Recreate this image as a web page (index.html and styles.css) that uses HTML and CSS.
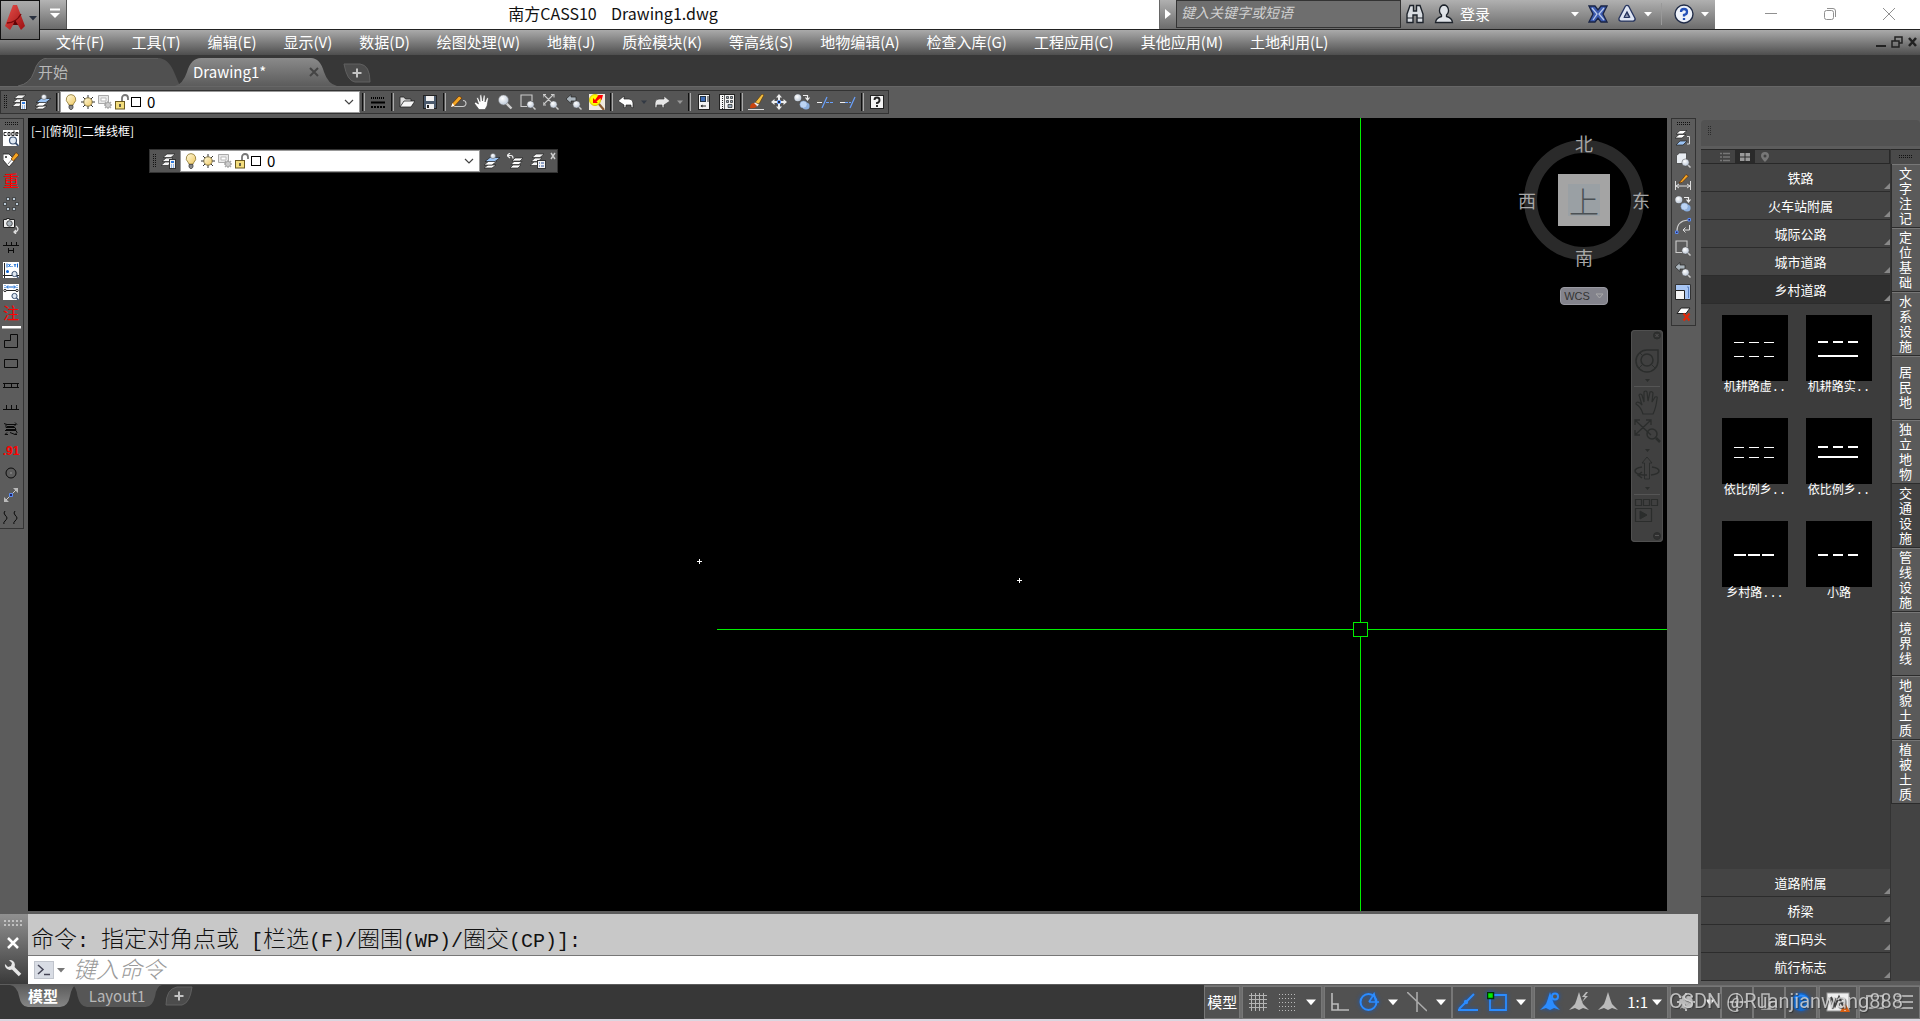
FILE: index.html
```html
<!DOCTYPE html>
<html lang="zh-CN">
<head>
<meta charset="utf-8">
<title>南方CASS10 Drawing1.dwg</title>
<link rel="stylesheet" href="styles.css">
</head>
<body>
<svg class="sprite" aria-hidden="true">
  <defs>
    <linearGradient id="gBulb" x1="0" y1="0" x2="1" y2="1"><stop offset="0" stop-color="#fffbe0"/><stop offset="1" stop-color="#f0c860"/></linearGradient>
    <linearGradient id="gRed" x1="0" y1="0" x2="1" y2="1"><stop offset="0" stop-color="#e8504a"/><stop offset="1" stop-color="#9c0f12"/></linearGradient>
    <radialGradient id="gLens" cx=".4" cy=".35" r=".7"><stop offset="0" stop-color="#fff"/><stop offset="1" stop-color="#b8c4d4"/></radialGradient>
  </defs>
  <symbol id="i-stack" viewBox="0 0 16 16"><g fill="#f4f4f4" stroke="#2a2a2a" stroke-width=".7"><path d="M0 12.500l4-3.500h7l-4 3.500z"/><path d="M1 8.500l4-3.500h7l-4 3.500z"/><path d="M2 4.500l4-3.500h8l-4 3.500z"/></g></symbol>
  <symbol id="i-layerprops" viewBox="0 0 16 16"><use href="#i-stack"/><rect x="8.500" y="6.500" width="6" height="9" fill="#f2f2f2" stroke="#333"/><rect x="10" y="8" width="3" height="2" fill="#2f7be0"/><path d="M10 12h1m1 0h1M10 14h1m1 0h1" stroke="#2f7be0"/></symbol>
  <symbol id="i-layerlist" viewBox="0 0 16 16"><use href="#i-stack"/><rect x="7.500" y="7.500" width="8" height="8" fill="#f2f2f2" stroke="#333"/><path d="M9 10h1m1 0h3M9 13h1m1 0h3" stroke="#2a4f9a"/></symbol>
  <symbol id="i-layercur" viewBox="0 0 16 16"><g stroke="#222" stroke-width=".7"><path d="M0 15l4-3h8l-4 3z" fill="#fff"/><path d="M0 12l5-4h8l-5 4z" fill="#fff"/><path d="M1 8.500l5-4h10l-5 4z" fill="#9cc4f4"/></g><circle cx="9" cy="3" r="2.600" fill="url(#gLens)" stroke="#666" stroke-width=".5"/></symbol>
  <symbol id="i-layerprev" viewBox="0 0 16 16"><g fill="#fff" stroke="#222" stroke-width=".7"><path d="M3 15l3-3h8l-3 3z"/><path d="M4 11.500l3-3h8l-3 3z"/><path d="M5 8l3-3h8l-3 3z"/></g><path d="M3 0L0 2.500 3 5M0 2.500h4q2 0 2 3" fill="none" stroke="#eee" stroke-width="1.200"/></symbol>
  <symbol id="i-bulb" viewBox="0 0 16 16"><path d="M8 .6a4.800 4.800 0 0 1 3 8.500L10 11H6L5 9.100A4.800 4.800 0 0 1 8 .6z" fill="url(#gBulb)" stroke="#8a7330" stroke-width=".8"/><path d="M6 11.500h4v2.500l-1.200 1.500H7.200L6 14z" fill="#888" stroke="#333" stroke-width=".7"/></symbol>
  <symbol id="i-sun" viewBox="0 0 16 16"><path d="M8 1v14M1 8h14M3 3l10 10M13 3L3 13" stroke="#333"/><circle cx="8" cy="8" r="4.200" fill="url(#gBulb)" stroke="#6a5a28" stroke-width=".8"/></symbol>
  <symbol id="i-vpfreeze" viewBox="0 0 16 16"><path d="M1.500 1.500h10v8h-10z" fill="#e8e8e8" stroke="#aaa"/><path d="M4 4h5v3H4z" fill="#fff" stroke="#bbb"/><path d="M11 7v8M7 11h8M8 8l6 6m0-6l-6 6" stroke="#aaa" stroke-width="1.300"/><circle cx="11" cy="11" r="2.600" fill="#ccc" stroke="#999" stroke-width=".7"/></symbol>
  <symbol id="i-lock" viewBox="0 0 16 16"><path d="M8 8V4a3 3 0 0 1 6 0v2" fill="none" stroke="#777" stroke-width="1.800"/><rect x="1.500" y="7.500" width="9" height="7.500" fill="#f3dd7c" stroke="#6b5a20"/><path d="M6 10v3" stroke="#333" stroke-width="1.500"/></symbol>
  <symbol id="i-lines" viewBox="0 0 16 16"><path d="M1 4h14" stroke="#000" stroke-width="2" stroke-dasharray="1 1"/><path d="M1 8.500h14" stroke="#000" stroke-width="2"/><path d="M1 13h14" stroke="#000" stroke-width="2" stroke-dasharray="2 1"/></symbol>
  <symbol id="i-open" viewBox="0 0 16 16"><path d="M1 13V3h4l1.500 2H12v2" fill="#ddd" stroke="#222" stroke-width=".8"/><path d="M1 13l4-6h11l-4 6z" fill="#f5f5f5" stroke="#222" stroke-width=".8"/></symbol>
  <symbol id="i-save" viewBox="0 0 16 16"><rect x="1.500" y="1.500" width="13" height="13" fill="#4b5a6c" stroke="#222"/><rect x="4" y="2" width="8" height="5" fill="#f0f0f0"/><rect x="4" y="10" width="8" height="5" fill="#f0f0f0"/><path d="M6 11v3" stroke="#222" stroke-width="2"/></symbol>
  <symbol id="i-pencil" viewBox="0 0 16 16"><path d="M3 12.500h9a3 3 0 0 0 0-6" fill="none" stroke="#ccc" stroke-width="1.100"/><path d="M0 13l1.500-4L8 2l3 2-7.500 8z" fill="#f5a623" stroke="#5a2d0a" stroke-width=".7"/><path d="M0 13l1.500-4 2 3z" fill="#fff"/></symbol>
  <symbol id="i-hand" viewBox="0 0 16 16"><path d="M5 15.500L.5 9.500 1.500 8l3 2L2.500 4l1.500-.7L6 7.500 5.800 1 7.500.6 8.500 7l1-6 1.600.3L11 8l2-4.500 1.500.5L13 12l-2 3.500z" fill="#fff" stroke="#444" stroke-width=".6"/></symbol>
  <symbol id="i-zoom" viewBox="0 0 16 16"><path d="M9.500 9.500l5 5" stroke="#d0d0d0" stroke-width="2.400"/><circle cx="6.500" cy="6" r="5" fill="url(#gLens)" stroke="#777" stroke-width=".5"/></symbol>
  <symbol id="i-smzoom" viewBox="0 0 16 16"><path d="M12.500 12.500l3 3" stroke="#ccc" stroke-width="1.500"/><circle cx="10.500" cy="10.500" r="3.600" fill="url(#gLens)" stroke="#555" stroke-width=".5"/></symbol>
  <symbol id="i-zoomwin" viewBox="0 0 16 16"><path d="M7 12.500H1V1h11v6" fill="none" stroke="#ccc" stroke-width="1.100"/><use href="#i-smzoom"/></symbol>
  <symbol id="i-zoomext" viewBox="0 0 16 16"><path d="M1 1l9 9M10 1L1 10M0 3.500V.5h3M8 .5h3v3M0 8v3h3" fill="none" stroke="#ccc" stroke-width="1.100"/><use href="#i-smzoom"/></symbol>
  <symbol id="i-zoomprev" viewBox="0 0 16 16"><path d="M0 5l5-4.500V3h5v4H5v2.500z" fill="#aab4bc" stroke="#222" stroke-width=".7"/><use href="#i-smzoom"/></symbol>
  <symbol id="i-zoomobj" viewBox="0 0 16 16"><path d="M1.500 3.500l3-2.500h7v8l-3 2.500h-7z" fill="#e9edf2" stroke="#333" stroke-width=".7"/><use href="#i-smzoom"/></symbol>
  <symbol id="i-redzoom" viewBox="0 0 16 16"><path d="M0 0h16v16H0z" fill="#f0eadf"/><circle cx="6" cy="6" r="5.500" fill="#ff0" stroke="#d8c800"/><path d="M4 4v5h5L7.500 7.500l4-3.500 1 2.500L14 1H9.500L6 6z" fill="#f00"/><path d="M10 10l5 6" stroke="#8a5a30" stroke-width="2.200"/></symbol>
  <symbol id="i-undo" viewBox="0 0 16 16"><path d="M0 7l6-5v3h5q4 0 4 4v5l-2-1v-2H8v2l-2 1v-3z" fill="#fff" stroke="#222" stroke-width=".7"/></symbol>
  <symbol id="i-redo" viewBox="0 0 16 16"><path d="M16 7l-6-5v3H5Q1 5 1 9v5l2-1v-2h5v2l2 1v-3z" fill="#e6e6e6" stroke="#444" stroke-width=".7"/></symbol>
  <symbol id="i-sheet" viewBox="0 0 16 16"><rect x="2.500" y=".5" width="11" height="15" fill="#f4f4f4" stroke="#222"/><rect x="4.500" y="2.500" width="5" height="5" fill="#3f6db8" stroke="#234"/><path d="M12 2v6M5 12h5" stroke="#222"/><path d="M4.500 12l2-1.500v3z" fill="#222"/></symbol>
  <symbol id="i-palette" viewBox="0 0 16 16"><rect x=".5" y=".5" width="15" height="15" fill="#f4f4f4" stroke="#222"/><path d="M3.500 2v13" stroke="#222" stroke-dasharray="1 1"/><path d="M5.500 1v14" stroke="#666"/><g fill="#9ab" stroke="#222" stroke-width=".7"><path d="M7.500 2.500h2v2h-2zM11.500 2.500h2v2h-2zM7.500 6.500h2v2h-2zM11.500 6.500h2v2h-2z"/><path d="M9 10.500h4v3H9z"/></g></symbol>
  <symbol id="i-brush" viewBox="0 0 16 16"><path d="M0 15.500h16" stroke="#ddd"/><path d="M7 8.500L14 0l2 1-5 9z" fill="#f6c040" stroke="#5a3a10" stroke-width=".7"/><path d="M5.500 9.500l1.500-1 4 2-2 2z" fill="#eee"/><path d="M2 14q0-5 4-5l3 3q-2 3-7 2z" fill="#c84410"/></symbol>
  <symbol id="i-move" viewBox="0 0 16 16"><path d="M8 0l3 3.500H9V6H7V3.500H5zM8 16l-3-3.500h2V10h2v2.500h2zM0 8l3.500-3v2H6v2H3.500v2zM16 8l-3.500 3V9H10V7h2.500V5z" fill="#eee"/><path d="M6.500 6.500h3v3h-3z" fill="#223" stroke="#6aa2ff"/></symbol>
  <symbol id="i-copy" viewBox="0 0 16 16"><circle cx="3.800" cy="3.800" r="3.500" fill="url(#gLens)"/><circle cx="12" cy="12" r="3.600" fill="#8cb0e0"/><circle cx="9.500" cy="10.500" r="3.600" fill="#bcd4f4" stroke="#7d9cc8" stroke-width=".5"/><path d="M9 1.500h4.500v4M11.500 3.500l2 2.500 2-2.500" fill="none" stroke="#eee" stroke-width="1.200"/></symbol>
  <symbol id="i-trim" viewBox="0 0 16 16"><path d="M0 8.500h5" stroke="#eee"/><path d="M9 8.500h7" stroke="#6aa2ff" stroke-dasharray="3 1"/><path d="M5 14L10 3" stroke="#6aa2ff" stroke-width="1.200"/></symbol>
  <symbol id="i-extend" viewBox="0 0 16 16"><path d="M0 8.500h5" stroke="#eee"/><path d="M5 8.500h6" stroke="#6aa2ff" stroke-dasharray="3 1"/><path d="M10 14l5-11" stroke="#6aa2ff" stroke-width="1.200"/></symbol>
  <symbol id="i-help" viewBox="0 0 16 16"><rect x="1.500" y="1.500" width="13" height="13" fill="#f4f4f4" stroke="#222"/><path d="M5.500 6q0-2.500 2.500-2.500T10.500 6 8 9v1M8 11v2" fill="none" stroke="#222" stroke-width="1.900"/></symbol>
  <symbol id="i-tag" viewBox="0 0 16 16"><path d="M0 2h6l6 6-6 7-6-7z" fill="#fff" stroke="#222" stroke-width=".8"/><circle cx="3" cy="5" r="1" fill="#222"/><path d="M5 12l6-7" stroke="#777"/><path d="M8 7l5-6.500L16 3l-5.500 6z" fill="#f5a623" stroke="#5a2d0a" stroke-width=".7"/></symbol>
  <symbol id="i-code" viewBox="0 0 16 16"><path d="M0 0h16v16H0z" fill="#fff"/><path d="M3.500 2.500H1v3h2.500M5 2.500h2v3H5zM11 .5v5H8.800v-3H11M15 5.500h-2.200v-3H15V4h-2" fill="none" stroke="#111" stroke-width=".9"/><circle cx="10" cy="10.500" r="3.500" fill="#dfe8f2" stroke="#3a5070" stroke-width="1.200"/><path d="M12.500 13l3 3" stroke="#3a5070" stroke-width="1.800"/></symbol>
  <symbol id="i-dots" viewBox="0 0 16 16"><g fill="#b9c8d4" stroke="#333" stroke-width=".8"><path d="M3.500 1.500h3v3h-3zM9.500 1.500h3v3h-3zM.5 6.500h3v3h-3zM12.500 6.500h3v3h-3zM3.500 11.500h3v3h-3zM9.500 11.500h3v3h-3z"/></g></symbol>
  <symbol id="i-camera" viewBox="0 0 16 16"><path d="M.5 1.500h3v-1h3v1h5v8H.5z" fill="#eee" stroke="#222"/><circle cx="6.500" cy="5.500" r="2.800" fill="#aab4bc" stroke="#333" stroke-width=".8"/><path d="M13 8q4 3 0 6h-2m2-2l-2 2 2 2" fill="none" stroke="#ddd" stroke-width="1.300"/></symbol>
  <symbol id="i-fence" viewBox="0 0 16 16"><path d="M0 5.500h16M3.500 2v3.500M8.500 2v3.500M13.500 2v3.500M5.500 8v5M10.500 8v5M5.500 10.500h5" stroke="#0a0a0a" fill="none"/></symbol>
  <symbol id="i-xy" viewBox="0 0 16 16"><path d="M0 0h16v16H0z" fill="#fff"/><path d="M1.500 1v15M0 13.500h16" stroke="#222"/><path d="M4 1.500v4M5.500 2l2 3m0-3l-2 3M9 4v1M11 2l1 1.500L13 2m-1 1.500V5M14.500 1.500v4" stroke="#0a62d0" fill="none"/><circle cx="4.500" cy="9.500" r="1.500" fill="#0a62d0"/><circle cx="11.500" cy="12" r="2.600" fill="#dfe8f2" stroke="#3a5070"/><path d="M13.500 14l2 2" stroke="#3a5070" stroke-width="1.500"/></symbol>
  <symbol id="i-dist" viewBox="0 0 16 16"><path d="M0 0h16v16H0z" fill="#fff"/><path d="M2 1v4M14 1v4" stroke="#0a62d0" stroke-dasharray="1 1"/><path d="M4 3h8M5 1.500L3.500 3 5 4.500M11 1.500L12.500 3 11 4.500" stroke="#0a62d0" fill="none"/><path d="M2 6.500h12" stroke="#222"/><circle cx="2" cy="6.500" r="1.200" fill="#fff" stroke="#222"/><circle cx="14" cy="6.500" r="1.200" fill="#fff" stroke="#222"/><circle cx="11.500" cy="12" r="2.600" fill="#dfe8f2" stroke="#3a5070"/><path d="M13.500 14l2 2" stroke="#3a5070" stroke-width="1.500"/></symbol>
  <symbol id="i-poly" viewBox="0 0 16 16"><path d="M1.500 14.500V7.500h6v-6h7v13z" fill="none" stroke="#0a0a0a"/></symbol>
  <symbol id="i-rect" viewBox="0 0 16 16"><path d="M1.500 4.500h13v8h-13z" fill="none" stroke="#0a0a0a"/></symbol>
  <symbol id="i-rail" viewBox="0 0 16 16"><path d="M0 6.500h16M0 10.500h16M1.500 6v5M8.500 6v5M14.500 6v5" fill="none" stroke="#0a0a0a"/></symbol>
  <symbol id="i-comb" viewBox="0 0 16 16"><path d="M0 10.500h16M3.500 6v4M8.500 6v4M13.500 6v4" fill="none" stroke="#0a0a0a"/></symbol>
  <symbol id="i-scrib" viewBox="0 0 16 16"><path d="M1 2.500l3 1h9l-2 2H4M3 3.500v3h9l1 2H3M2 9.500h11l1 2-2 2M4 11.500l-2 2h3M7 11.500l5 2h2M12 1.500l2 2" fill="none" stroke="#0a0a0a"/></symbol>
  <symbol id="i-circle" viewBox="0 0 16 16"><circle cx="8" cy="8" r="5" fill="none" stroke="#0a0a0a"/><path d="M7.500 8h1" stroke="#ccc"/></symbol>
  <symbol id="i-diag" viewBox="0 0 16 16"><path d="M3 13L13 3" stroke="#ccc"/><path d="M10 1h5v5zM1 10v5h5z" fill="#bbb"/><path d="M6.500 6.500h3v3h-3z" fill="#226" stroke="#5a8cf0"/></symbol>
  <symbol id="i-waves" viewBox="0 0 16 16"><path d="M2 2q-2 2 0 4t2 3-2 3-1 3M12 2q-2 2 0 4t2 3-2 3-1 3" fill="none" stroke="#0a0a0a"/></symbol>
  <symbol id="i-laymatch" viewBox="0 0 16 16"><g stroke="#222" stroke-width=".7"><path d="M1 4l4-3.500h7L8 4z" fill="#fff"/><path d="M0 8l4-3.500h7L7 8z" fill="#fff"/><path d="M1 15l4-4h7l-4 4z" fill="#9cc4f4"/></g><path d="M12 6.500h2.500V14H12" fill="none" stroke="#ddd"/></symbol>
  <symbol id="i-dim" viewBox="0 0 16 16"><path d="M.5 7v9M15.500 7v9M1 12h14M4 10l-3 2 3 2M12 10l3 2-3 2" fill="none" stroke="#ddd"/><path d="M4 9l7-8.500L13.500 2 7 8.500z" fill="#f5a623" stroke="#5a2d0a" stroke-width=".7"/></symbol>
  <symbol id="i-arc" viewBox="0 0 16 16"><path d="M2 13Q2 3 13 2" fill="none" stroke="#ccc" stroke-width="1.200"/><path d="M13 .5h2.500V3H13zM.5 13H3v2.500H.5z" fill="#226" stroke="#5a8cf0"/><path d="M14.500 7v5H8m2.500-2.500L8 12l2.500 2.500" fill="none" stroke="#ddd"/></symbol>
  <symbol id="i-scale" viewBox="0 0 16 16"><path d="M.5.5h15v15H.5z" fill="#a8c6f4" stroke="#333"/><path d="M12 3h1.500v11" stroke="#5a80c0" fill="none"/><path d="M.5 6.500h9v9h-9z" fill="#f4f4f4" stroke="#222"/></symbol>
  <symbol id="i-erase" viewBox="0 0 16 16"><path d="M2 7.500L6 2h9l-4 5.500z" fill="#fff" stroke="#222"/><path d="M8.500 7.500l6 7m0-7l-6 7" stroke="#e02808" stroke-width="2.200"/></symbol>
  <symbol id="i-binoc" viewBox="0 0 20 20"><g fill="#d9dde2" stroke="#1d232b" stroke-width="1.400"><path d="M5 1.500h3.500V7h3V1.500H15L18 10v8.500h-6V11H8v7.500H2V10z"/></g><path d="M2 14h6M12 14h6" stroke="#1d232b"/></symbol>
  <symbol id="i-user" viewBox="0 0 20 20"><path d="M10 1a4.600 5.500 0 0 1 2.500 10v1.500Q18 14 18.500 18.500H1.500Q2 14 7.500 12.500V11A4.600 5.500 0 0 1 10 1z" fill="#dfe3e8" stroke="#1d232b" stroke-width="1.300"/></symbol>
  <symbol id="i-exch" viewBox="0 0 20 20"><path d="M1 2h6l3 4 3-4h6l-4 8 4 8h-6l-3-4-3 4H1l4-8z" fill="#3c5bb0" stroke="#1a2546" stroke-width="1.300"/><path d="M4 4l5 6-4 6M16 4l-5 6 5 6" stroke="#b8c8ea" fill="none" stroke-width="1.300"/></symbol>
  <symbol id="i-a360" viewBox="0 0 20 20"><g fill="none" stroke-linejoin="round" stroke-linecap="round"><path d="M10 3.500L16 15H4z" stroke="#26345f" stroke-width="5.500"/><path d="M10 3.500L16 15H4z" stroke="#dfe6f4" stroke-width="2.800"/><path d="M10 9l2.500 4.500h-5z" fill="#8a94b0" stroke="#26345f"/></g></symbol>
  <symbol id="i-qmark" viewBox="0 0 20 20"><circle cx="10" cy="10" r="9" fill="#eef2fa" stroke="#222d48" stroke-width="1.400"/><path d="M7 8q0-3 3-3t3 2.700T10 11v1.500M10 14v2" fill="none" stroke="#2350b8" stroke-width="2.300"/></symbol>
  <symbol id="i-down" viewBox="0 0 8 8"><path d="M0 2h8L4 6.500z" fill="currentColor"/></symbol>
  <symbol id="i-chev" viewBox="0 0 10 8"><path d="M1 2l4 4 4-4" fill="none" stroke="#444" stroke-width="1.200"/></symbol>
  <symbol id="i-compass" viewBox="0 0 20 20"><path d="M10 0l2.500 8 1.500 4 6 6-6-2-4 2-4-2-6 2 6-6 1.500-4z" fill="currentColor"/></symbol>
</svg>

<header class="titlebar">
  <button class="app-btn" aria-label="应用程序菜单"><svg width="22" height="26" viewBox="0 0 20 26"><path d="M8 0h4l8 21-4 4-3-5H8l-3 5-5-4z" fill="url(#gRed)"/><path d="M2 18q9 0 14-9" fill="none" stroke="#7c0a0c" stroke-width="1.500"/><path d="M8 20l2-5 3 5z" fill="#5e0406"/></svg><svg class="dark" width="8" height="8"><use href="#i-down"/></svg></button>
  <button class="quick-btn" aria-label="自定义"><svg width="12" height="12" viewBox="0 0 12 12"><path d="M1 1.500h10" stroke="#fff" stroke-width="2"/><path d="M1 5h10l-5 5z" fill="#fff"/></svg></button>
  <h1 class="title">南方CASS10 &nbsp;&nbsp; Drawing1.dwg</h1>
  <div class="infocenter">
    <button class="ic-arrow" aria-label="展开"><svg width="6" height="10" viewBox="0 0 6 10"><path d="M0 0l6 5-6 5z" fill="#fff"/></svg></button>
    <input class="ic-search" type="text" aria-label="搜索" placeholder="键入关键字或短语">
    <button aria-label="查找"><svg width="20" height="20"><use href="#i-binoc"/></svg></button>
    <button class="login"><svg width="20" height="20"><use href="#i-user"/></svg><span>登录</span><svg class="login-caret" width="8" height="8"><use href="#i-down"/></svg></button>
    <button aria-label="Exchange"><svg width="20" height="20"><use href="#i-exch"/></svg></button>
    <button class="pair" aria-label="A360"><svg width="20" height="20"><use href="#i-a360"/></svg><svg width="8" height="8"><use href="#i-down"/></svg></button>
    <button class="pair helpbtn" aria-label="帮助"><svg width="20" height="20"><use href="#i-qmark"/></svg><svg width="8" height="8"><use href="#i-down"/></svg></button>
  </div>
  <div class="winctl">
    <button aria-label="最小化"><svg width="14" height="14" viewBox="0 0 14 14"><path d="M1 6.500h12"/></svg></button>
    <button aria-label="还原"><svg width="14" height="14" viewBox="0 0 14 14"><rect x="1.500" y="3.500" width="9" height="9" rx="2"/><path d="M4 1.500h6q2.500 0 2.500 2.500v6"/></svg></button>
    <button aria-label="关闭"><svg width="14" height="14" viewBox="0 0 14 14"><path d="M1 1l12 12M13 1L1 13"/></svg></button>
  </div>
</header>

<nav class="menubar">
  <a href="#">文件(F)</a><a href="#">工具(T)</a><a href="#">编辑(E)</a><a href="#">显示(V)</a><a href="#">数据(D)</a><a href="#">绘图处理(W)</a><a href="#">地籍(J)</a><a href="#">质检模块(K)</a><a href="#">等高线(S)</a><a href="#">地物编辑(A)</a><a href="#">检查入库(G)</a><a href="#">工程应用(C)</a><a href="#">其他应用(M)</a><a href="#">土地利用(L)</a>
  <div class="mdi">
    <button aria-label="最小化图形"><svg width="10" height="12" viewBox="0 0 10 12"><path d="M0 10h10" stroke="#222" stroke-width="2"/></svg></button>
    <button aria-label="还原图形"><svg width="12" height="12" viewBox="0 0 12 12" fill="none" stroke="#222"><path d="M1 5h7v6H1zM4 5V1h7v6H8" stroke-width="1.500"/></svg></button>
    <button aria-label="关闭图形"><svg width="9" height="12" viewBox="0 0 9 12"><path d="M1 2l7 8M8 2l-7 8" stroke="#222" stroke-width="2.500"/></svg></button>
  </div>
</nav>

<div class="doctabs">
  <button class="dtab"><svg class="shape" preserveAspectRatio="none" viewBox="0 0 162 28"><path d="M0 28Q12 26 16 14 20 0 30 0H140Q150 0 156 14L162 28z" fill="#505050"/><path d="M0 28Q12 26 16 14 20 0 30 0H140" fill="none" stroke="#666"/></svg><span>开始</span></button>
  <button class="dtab active"><svg class="shape" preserveAspectRatio="none" viewBox="0 0 162 28"><defs><linearGradient id="gTab" x1="0" y1="0" x2="0" y2="1"><stop offset="0" stop-color="#8a8a8a"/><stop offset="1" stop-color="#5c5c5c"/></linearGradient></defs><path d="M0 28Q8 26 12 14 16 0 26 0H136Q145 0 149 14 153 26 162 28z" fill="url(#gTab)"/></svg><span>Drawing1*</span><svg class="x" width="10" height="10" viewBox="0 0 10 10"><path d="M1 1l8 8M9 1L1 9" stroke="#444" stroke-width="2"/></svg></button>
  <button class="addtab" aria-label="新图形"><svg width="28" height="20" viewBox="0 0 28 20"><path d="M1 1h16q10 1 10 18H12Q4 18 1 1z" fill="#4c4c4c" stroke="#606060"/><path d="M14 5.500v9M9.500 10h9" stroke="#c4c4c4" stroke-width="2"/></svg></button>
</div>

<div class="toolrow">
  <div class="toolbar" role="toolbar" aria-label="标准">
    <i class="grip"></i>
    <button aria-label="图层特性"><svg><use href="#i-layerprops"/></svg></button>
    <button aria-label="置为当前"><svg><use href="#i-layercur"/></svg></button>
    <i class="sep"></i>
    <button class="layer"><svg><use href="#i-bulb"/></svg><svg><use href="#i-sun"/></svg><svg><use href="#i-vpfreeze"/></svg><svg><use href="#i-lock"/></svg><i class="swatch"></i><span>0</span><svg class="chev"><use href="#i-chev"/></svg></button>
    <i class="sep"></i>
    <button aria-label="线型"><svg><use href="#i-lines"/></svg></button>
    <i class="sep"></i>
    <button aria-label="打开"><svg><use href="#i-open"/></svg></button>
    <button aria-label="保存"><svg><use href="#i-save"/></svg></button>
    <i class="sep"></i>
    <button aria-label="绘制"><svg><use href="#i-pencil"/></svg></button>
    <button aria-label="平移"><svg><use href="#i-hand"/></svg></button>
    <button aria-label="缩放"><svg><use href="#i-zoom"/></svg></button>
    <button aria-label="窗口缩放"><svg><use href="#i-zoomwin"/></svg></button>
    <button aria-label="范围缩放"><svg><use href="#i-zoomext"/></svg></button>
    <button aria-label="上一个"><svg><use href="#i-zoomprev"/></svg></button>
    <button aria-label="重画"><svg><use href="#i-redzoom"/></svg></button>
    <i class="sep"></i>
    <button class="wide" aria-label="放弃"><svg><use href="#i-undo"/></svg><svg class="tiny"><use href="#i-down"/></svg></button>
    <button class="wide lit" aria-label="重做"><svg><use href="#i-redo"/></svg><svg class="tiny"><use href="#i-down"/></svg></button>
    <i class="sep"></i>
    <button aria-label="特性"><svg><use href="#i-sheet"/></svg></button>
    <button aria-label="工具选项板"><svg><use href="#i-palette"/></svg></button>
    <i class="sep"></i>
    <button aria-label="特性匹配"><svg><use href="#i-brush"/></svg></button>
    <button aria-label="移动"><svg><use href="#i-move"/></svg></button>
    <button aria-label="复制"><svg><use href="#i-copy"/></svg></button>
    <button aria-label="修剪"><svg><use href="#i-trim"/></svg></button>
    <button aria-label="延伸"><svg><use href="#i-extend"/></svg></button>
    <i class="sep"></i>
    <button aria-label="帮助"><svg><use href="#i-help"/></svg></button>
  </div>
</div>

<main class="workspace">
  <div class="editor">
    <div class="stage">
      <div class="vbar left" role="toolbar" aria-label="实用工具">
        <i class="hgrip"></i>
        <button aria-label="查看编码"><svg><use href="#i-code"/></svg></button>
        <button aria-label="加入编码"><svg><use href="#i-tag"/></svg></button>
        <button class="glyph">重</button>
        <button aria-label="批量选取"><svg><use href="#i-dots"/></svg></button>
        <button aria-label="视图"><svg><use href="#i-camera"/></svg></button>
        <button aria-label="线型换向"><svg><use href="#i-fence"/></svg></button>
        <button aria-label="坐标"><svg><use href="#i-xy"/></svg></button>
        <button aria-label="距离"><svg><use href="#i-dist"/></svg></button>
        <button class="glyph">注</button>
        <i class="hsep"></i>
        <button aria-label="多点房屋"><svg><use href="#i-poly"/></svg></button>
        <button aria-label="四点房屋"><svg><use href="#i-rect"/></svg></button>
        <button aria-label="围墙"><svg><use href="#i-rail"/></svg></button>
        <button aria-label="陡坎"><svg><use href="#i-comb"/></svg></button>
        <button aria-label="斜坡"><svg><use href="#i-scrib"/></svg></button>
        <button class="glyph num">.91</button>
        <button aria-label="图根点"><svg><use href="#i-circle"/></svg></button>
        <button aria-label="电力线"><svg><use href="#i-diag"/></svg></button>
        <button aria-label="道路"><svg><use href="#i-waves"/></svg></button>
      </div>
      <section class="canvas" aria-label="绘图区">
        <span class="vplabel">[−][俯视][二维线框]</span>
        <div class="toolbar floating" role="toolbar" aria-label="图层">
          <i class="grip"></i>
          <button aria-label="图层特性"><svg><use href="#i-layerprops"/></svg></button>
          <button class="layer"><svg><use href="#i-bulb"/></svg><svg><use href="#i-sun"/></svg><svg><use href="#i-vpfreeze"/></svg><svg><use href="#i-lock"/></svg><i class="swatch"></i><span>0</span><svg class="chev"><use href="#i-chev"/></svg></button>
          <button aria-label="置为当前"><svg><use href="#i-layercur"/></svg></button>
          <button aria-label="上一个图层"><svg><use href="#i-layerprev"/></svg></button>
          <button aria-label="图层状态"><svg><use href="#i-layerlist"/></svg></button>
          <button class="tbclose" aria-label="关闭"><svg viewBox="0 0 6 8"><path d="M1 1l4 6M5 1L1 7" stroke="#ccc" stroke-width="1.500"/></svg></button>
        </div>
        <i class="pt p1"></i><i class="pt p2"></i>
        <i class="cross-v"></i><i class="cross-h"></i><i class="pick"></i>
        <div class="viewcube">
          <i class="ring"></i>
          <span class="n">北</span><span class="w">西</span><button class="face">上</button><span class="e">东</span><span class="s">南</span>
        </div>
        <button class="wcs">WCS<svg width="9" height="6" viewBox="0 0 9 6"><path d="M1 1h7L4.500 5z" fill="none" stroke="#aaa"/></svg></button>
        <div class="navbar">
          <svg width="32" height="212" viewBox="0 0 32 212" fill="none" stroke="#2b2d2c">
            <circle cx="26" cy="5.500" r="3.500" fill="#303030"/><path d="M24.500 4l3 3m0-3l-3 3" stroke="#555"/>
            <path d="M16 20h11v11a11 11 0 1 1-11-11z" stroke-width="1.500"/><circle cx="16" cy="30" r="6" stroke-width="1.500"/><path d="M11 35l-3 3M21 35l3 3M11 25l-2-2"/>
            <path d="M14 49h5l-2.500 3zM14 119h5l-2.500 3zM14 157h5l-2.500 3z" fill="#2b2d2c" stroke="none"/>
            <path d="M3 56.500h26M3 164.500h26" stroke="#555"/>
            <path d="M12 84q-2-7-7-10 0-3 4-1l2 2-3-10q1-2 3 0l2 7V62q2-2 3 0l1 9 2-9q2-1 3 1l-1 9 3-5q3-1 2 2-1 9-4 15z" stroke-width="1.200"/>
            <path d="M4 90l16 15M20 90L4 105M4 95v-5h5M15 90h5v5M4 100v5h5" stroke-width="1.300"/><circle cx="21" cy="104" r="5" stroke-width="1.500"/><path d="M25 108l4 4" stroke-width="2.500"/>
            <path d="M13.500 149v-16H11l5-6 5 6h-2.500v16z"/><path d="M11 137q-7 1-7 4t8 4h4M21 137q7 1 7 4t-8 4M11 142l-4 3 4 3" stroke-width="1.500"/>
            <path d="M4.500 169.500h6v6h-6zM12.500 169.500h6v6h-6zM20.500 169.500h6v6h-6zM4.500 178.500h16v13h-16z" stroke-width="1.200"/><path d="M9 181v8l7-4z" fill="#2b2d2c"/>
            <circle cx="26" cy="206" r="3.500" fill="#303030"/><path d="M24 205.500h4" stroke="#555"/>
          </svg>
        </div>
      </section>
      <div class="vbar right" role="toolbar" aria-label="修改">
        <i class="hgrip"></i>
        <button aria-label="图层匹配"><svg><use href="#i-laymatch"/></svg></button>
        <button aria-label="缩放对象"><svg><use href="#i-zoomobj"/></svg></button>
        <button aria-label="标注"><svg><use href="#i-dim"/></svg></button>
        <button aria-label="复制"><svg><use href="#i-copy"/></svg></button>
        <button aria-label="多段线"><svg><use href="#i-arc"/></svg></button>
        <button aria-label="窗口缩放"><svg><use href="#i-zoomwin"/></svg></button>
        <button aria-label="上一个"><svg><use href="#i-zoomprev"/></svg></button>
        <button aria-label="缩放"><svg><use href="#i-scale"/></svg></button>
        <button aria-label="删除"><svg><use href="#i-erase"/></svg></button>
      </div>
    </div>
    <section class="cmd" aria-label="命令行">
      <div class="cmd-side">
        <i class="hgrip"></i>
        <button aria-label="关闭"><svg width="12" height="12" viewBox="0 0 12 12"><path d="M1 1l10 10M11 1L1 11" stroke="#fff" stroke-width="2.500"/></svg></button>
        <button aria-label="自定义"><svg width="18" height="18" viewBox="0 0 18 18"><path d="M8 8l8 8" stroke="#e6e6e6" stroke-width="3.500"/><path d="M5 1a5 5 0 1 1-4 4l3 3 3-1 1-3z" fill="#e6e6e6"/></svg></button>
      </div>
      <div class="cmd-main">
        <p class="history">命令<b>: </b>指定对角点或<b> [</b>栏选<b>(F)/</b>圈围<b>(WP)/</b>圈交<b>(CP)]:</b></p>
        <div class="entry">
          <button aria-label="最近使用的命令"><svg width="20" height="18" viewBox="0 0 20 18"><rect x=".5" y=".5" width="19" height="17" fill="#d8dce4" stroke="#c0c4cc"/><path d="M4 4l5 4.500L4 13M10 13.500h6" fill="none" stroke="#445" stroke-width="1.500"/></svg><svg width="8" height="8"><use href="#i-down"/></svg></button>
          <input type="text" aria-label="命令" placeholder="键入命令">
        </div>
      </div>
    </section>
  </div>

  <aside class="palette">
    <div class="pal-head"><i class="grip"></i></div>
    <div class="pal-body">
      <div class="pal-main">
        <div class="viewmodes">
          <button aria-label="列表"><svg viewBox="0 0 10 10"><path d="M0 1.500h2M0 5h2M0 8.500h2M3 1.500h7M3 5h7M3 8.500h7" stroke="#777" stroke-width="1.500"/></svg></button>
          <button class="on" aria-label="图标"><svg viewBox="0 0 10 10"><path d="M0 1h4.500v3.500H0zM5.500 1H10v3.500H5.500zM0 5.500h4.500V9H0zM5.500 5.500H10V9H5.500z" fill="#999"/></svg></button>
          <button aria-label="位置"><svg viewBox="0 0 10 10"><path fill-rule="evenodd" d="M5 0a4 4 0 0 1 4 4q0 2-4 6-4-4-4-6a4 4 0 0 1 4-4zm0 2.500a1.500 1.500 0 1 0 0 3 1.500 1.500 0 0 0 0-3z" fill="#777"/></svg></button>
        </div>
        <button class="cat">铁路</button><button class="cat">火车站附属</button><button class="cat">城际公路</button><button class="cat">城市道路</button><button class="cat on">乡村道路</button>
        <div class="symbols">
          <button class="sym"><svg viewBox="0 0 66 66"><path d="M12 27.500h40M12 41.500h40" stroke-dasharray="10 5"/></svg><span>机耕路虚..</span></button>
          <button class="sym"><svg viewBox="0 0 66 66"><path d="M12 27h40" stroke-width="2" stroke-dasharray="10 5"/><path d="M12 41h40" stroke-width="2"/></svg><span>机耕路实..</span></button>
          <button class="sym"><svg viewBox="0 0 66 66"><path d="M12 29.500h40M12 39.500h40" stroke-dasharray="10 5"/></svg><span>依比例乡..</span></button>
          <button class="sym"><svg viewBox="0 0 66 66"><path d="M12 29h40" stroke-width="2" stroke-dasharray="10 5"/><path d="M12 39h40" stroke-width="2"/></svg><span>依比例乡..</span></button>
          <button class="sym"><svg viewBox="0 0 66 66"><path d="M12 34h40" stroke-width="2" stroke-dasharray="12 2"/></svg><span>乡村路...</span></button>
          <button class="sym"><svg viewBox="0 0 66 66"><path d="M12 34h40" stroke-width="2" stroke-dasharray="10 5"/></svg><span>小路</span></button>
        </div>
        <button class="cat">道路附属</button><button class="cat">桥梁</button><button class="cat">渡口码头</button><button class="cat">航行标志</button>
      </div>
      <div class="vtabs">
        <div class="vt-grip"><i class="hgrip"></i></div>
        <button>文字注记</button><button>定位基础</button><button>水系设施</button><button>居民地</button><button>独立地物</button><button class="on">交通设施</button><button>管线设施</button><button>境界线</button><button>地貌土质</button><button>植被土质</button>
      </div>
    </div>
  </aside>
</main>

<footer class="status">
  <div class="layouts">
    <button class="ltab on"><svg class="shape" preserveAspectRatio="none" viewBox="0 0 66 22"><defs><linearGradient id="gLt" x1="0" y1="0" x2="0" y2="1"><stop offset="0" stop-color="#5c5c5c"/><stop offset="1" stop-color="#868686"/></linearGradient></defs><path d="M0 0Q7 1 9 11 11 22 18 22H50Q58 22 60 11 62 1 66 0z" fill="url(#gLt)"/></svg><span>模型</span></button>
    <button class="ltab"><svg class="shape" preserveAspectRatio="none" viewBox="0 0 66 22"><path d="M0 0Q3 1 4 11 6 22 11 22H54Q59 22 61 11 62 1 66 0z" fill="#565656"/></svg><span>Layout1</span></button>
    <button class="addtab" aria-label="新建布局"><svg width="28" height="20" viewBox="0 0 28 20"><path d="M27 1H12Q1 3 1 19h16q8-2 10-18z" fill="#4c4c4c" stroke="#606060"/><path d="M14 5.500v9M9.500 10h9" stroke="#c4c4c4" stroke-width="2"/></svg></button>
  </div>
  <div class="cells">
    <div class="cell"><button class="model">模型</button></div>
    <div class="cell">
      <button aria-label="栅格"><svg viewBox="0 0 20 20"><path d="M3.500 1v18M7.500 1v18M11.500 1v18M15.500 1v18M1 3.500h18M1 7.500h18M1 11.500h18M1 15.500h18" stroke="#b4b4b4"/></svg></button>
      <button aria-label="捕捉"><svg viewBox="0 0 20 20"><path d="M2 2.500h17M2 6.500h17M2 10.500h17M2 14.500h17M2 18.500h17" stroke="#bbb" stroke-dasharray="1 2"/></svg></button>
      <button class="car" aria-label="捕捉选项"><svg class="c"><use href="#i-down"/></svg></button>
    </div>
    <div class="cell joined">
      <button aria-label="正交"><svg viewBox="0 0 20 20"><path d="M2 1v17h17M2 12h6v6" fill="none" stroke="#bbb" stroke-width="1.600"/></svg></button>
      <button class="glow" aria-label="极轴"><svg viewBox="0 0 20 20"><circle cx="9.500" cy="10" r="8" fill="none" stroke="#2b8cff" stroke-width="2"/><path d="M10 10h10M10 10l5-8 2 8" fill="none" stroke="#2b8cff" stroke-width="1.700"/></svg></button>
      <button class="car" aria-label="极轴选项"><svg class="c"><use href="#i-down"/></svg></button>
      <button aria-label="等轴测"><svg viewBox="0 0 20 20"><path d="M10 0v20M0 0l20 19" stroke="#aaa" stroke-width="1.600"/></svg></button>
      <button class="car" aria-label="等轴测选项"><svg class="c"><use href="#i-down"/></svg></button>
    </div>
    <div class="cell">
      <button class="glow" aria-label="追踪"><svg viewBox="0 0 20 20"><path d="M0 18h20M1 17L16 2" stroke="#2b8cff" stroke-width="2"/><circle cx="8" cy="10" r="2.200" fill="#2b8cff"/></svg></button>
      <button class="glow" aria-label="对象捕捉"><svg viewBox="0 0 20 20"><path d="M3 3h16v15H3z" fill="none" stroke="#2b8cff" stroke-width="1.800"/><path d="M.5.500h6v6h-6z" fill="#0e0" stroke="#030" stroke-width="1.500"/></svg></button>
      <button class="car" aria-label="捕捉设置"><svg class="c"><use href="#i-down"/></svg></button>
    </div>
    <div class="cell anno">
      <button class="glow blue" aria-label="注释可见性"><svg viewBox="0 0 20 20"><use href="#i-compass"/><circle cx="15" cy="4.500" r="3" fill="#555" stroke="#2b8cff" stroke-width="2"/></svg></button>
      <button aria-label="自动缩放"><svg viewBox="0 0 20 20"><use href="#i-compass"/><path d="M17 0l-4 5h3l-3 5 6-6h-3l3-4z" fill="#bbb"/></svg></button>
      <button aria-label="注释比例"><svg viewBox="0 0 20 20"><use href="#i-compass"/></svg></button>
      <button class="scale"><span>1:1</span><svg class="c"><use href="#i-down"/></svg></button>
    </div>
    <div class="cell joined"><button aria-label="切换工作空间"><svg viewBox="0 0 20 20"><circle cx="10" cy="10" r="5" fill="none" stroke="#bbb" stroke-width="4"/><path d="M10 1v18M1 10h18M4 4l12 12M16 4L4 16" stroke="#bbb" stroke-width="2"/></svg></button><button class="car" aria-label="工作空间"><svg class="c"><use href="#i-down"/></svg></button></div>
    <div class="cell joined"><button aria-label="注释监视器"><svg viewBox="0 0 20 20"><path d="M10 1v18M1 10h18" stroke="#bbb" stroke-width="2"/></svg></button></div>
    <div class="cell joined"><button aria-label="隔离对象"><svg viewBox="0 0 20 20"><path d="M3 2h7v15H3zM11 10h6v7h-6z" fill="none" stroke="#bbb" stroke-width="1.500"/></svg></button></div>
    <div class="cell"><button class="glow" aria-label="硬件加速"><svg viewBox="0 0 20 20"><circle cx="10" cy="10" r="9" fill="#1269cc"/><path d="M4 6q6-5 12 0" fill="none" stroke="#2b8cff" stroke-width="2"/></svg></button></div>
    <div class="cell"><button class="big" aria-label="通知"><svg viewBox="0 0 26 22"><rect x="2" y="2" width="22" height="18" fill="#eee" stroke="#999"/><path d="M6 6l4 9 4-9 4 9" stroke="#444" stroke-width="2" fill="none"/><path d="M20 12l5 9H15z" fill="#d95f12"/><path d="M20 15v3m0 1v1" stroke="#fff"/></svg></button></div>
    <div class="cell"><button aria-label="全屏"><svg viewBox="0 0 20 20"><path d="M2 4h16v12H2z" fill="none" stroke="#aaa" stroke-width="2"/></svg></button><button aria-label="自定义"><svg viewBox="0 0 20 20"><path d="M1 4h18M1 10h18M1 16h18" stroke="#aaa" stroke-width="2"/></svg></button></div>
  </div>
  <span class="watermark">CSDN @Ruanjianwang888</span>
</footer>
</body>
</html>
```
FILE: styles.css
```css
* { box-sizing: border-box; }
body {
  margin: 0;
  min-height: 100vh;
  display: flex;
  flex-direction: column;
  background: #5c5c5c;
  color: #fff;
  font: 15px/20px "Noto Sans CJK SC", sans-serif;
  overflow-x: hidden;
}
button, input {
  font: inherit;
  color: inherit;
  background: none;
  border: 0;
  margin: 0;
  padding: 0;
  border-radius: 0;
  outline: 0;
}
button { display: flex; align-items: center; justify-content: center; flex: none; }
svg { flex: none; display: block; }
.sprite { position: absolute; width: 0; height: 0; }

/* title bar */
.titlebar {
  position: relative;
  display: flex;
  height: 30px;
  flex: none;
  background: #fff;
  border-bottom: 1px solid #222;
}
.app-btn {
  position: absolute;
  z-index: 2;
  left: 0;
  top: 0;
  width: 40px;
  height: 40px;
  gap: 3px;
  padding-bottom: 4px;
  background: linear-gradient(#ababab, #6e6e6e);
  border: 1px solid #111;
}
.app-btn .dark { color: #2b3240; }
.quick-btn {
  width: 67px;
  padding: 0 0 2px 43px;
  background: linear-gradient(#b4b4b4, #6a6a6a);
  border-right: 1px solid #555;
}
.title {
  flex: 1;
  margin: 0;
  text-align: center;
  font: inherit;
  font-size: 16px;
  line-height: 27px;
  color: #111;
}
.infocenter {
  display: flex;
  align-items: center;
  width: 556px;
  background: linear-gradient(#b0b0b0, #6c6c6c);
  gap: 9px;
  padding: 0 6px 1px 0;
}
.ic-arrow { width: 17px; height: 28px; margin-right: -9px; border-left: 1px solid #666; }
.ic-search {
  width: 225px;
  height: 28px;
  padding: 0 4px 4px;
  background: #6e6e6e;
  border: 1px solid #333;
  font-size: 14px;
}
.ic-search::placeholder { color: #d0d0d0; font-style: italic; opacity: 1; }
.ic-search + button { margin-left: -5px; }
.login { flex: 1; gap: 6px; justify-content: flex-start; }
.login-caret { margin-left: auto; }
.pair { gap: 7px; }
.helpbtn { border-left: 1px solid #999; padding-left: 12px; height: 22px; }
.winctl { display: flex; width: 205px; padding: 0 0 1px 26px; }
.winctl button { width: 59px; }
.winctl svg { fill: none; stroke: #909090; stroke-width: 1; }

/* menu bar */
.menubar {
  display: flex;
  flex: none;
  height: 25px;
  align-items: center;
  gap: 27px;
  padding: 0 3px 2px 56px;
  background: linear-gradient(#aaa, #4e4e4e);
}
.menubar a { color: #fff; text-decoration: none; white-space: nowrap; }
.mdi { display: flex; gap: 5px; margin-left: auto; }

/* document tabs */
.doctabs {
  display: flex;
  flex: none;
  height: 31px;
  padding-left: 18px;
  align-items: flex-end;
  background: #373737;
}
.dtab { position: relative; width: 162px; height: 28px; padding: 0 18px 0 20px; justify-content: flex-start; color: #b8b8b8; }
.dtab.active { margin-left: -5px; padding-left: 18px; color: #fff; }
.shape { position: absolute; inset: 0; width: 100%; height: 100%; }
.dtab span, .ltab span { position: relative; }
.dtab .x { position: relative; margin-left: auto; }
.doctabs .addtab { margin: 0 0 3px 6px; }

/* tool bars */
.toolrow { display: flex; flex: none; height: 32px; padding: 3px 0; border-top: 1px solid #666; }
.toolbar {
  display: flex;
  align-items: center;
  height: 24px;
  border: 1px solid #333;
  background: #555;
}
.toolbar button { width: 23px; height: 22px; }
.toolbar svg, .vbar svg { width: 16px; height: 16px; }
.grip, .hgrip {
  flex: none;
  background-image: conic-gradient(#111 25%, transparent 0);
  background-size: 2px 2px;
}
.grip { width: 4px; height: 14px; margin: 0 1px 0 2px; }
.hgrip { width: 14px; height: 4px; }
.sep { width: 3px; height: 18px; margin: 0 1px 0 2px; border-left: 1px solid #111; border-right: 1px solid #aaa; flex: none; }
.toolbar .layer {
  width: 300px;
  background: #fff;
  color: #000;
  padding: 0 5px 0 2px;
  gap: 1px;
  justify-content: flex-start;
  border: 1px solid #999;
}
.swatch { width: 10px; height: 10px; border: 1px solid #000; }
.layer span { margin-left: 5px; }
.toolbar .chev { width: 10px; height: 8px; margin-left: auto; }
.toolbar .wide { width: 36px; gap: 7px; color: #333a44; }
.toolbar .lit { color: #999; }
.toolbar .tiny { width: 6px; height: 6px; }

/* work area */
.workspace { flex: 1; display: flex; }
.editor { flex: 1; display: flex; flex-direction: column; min-width: 0; }
.stage { flex: 1; display: flex; align-items: flex-start; }
.vbar {
  display: flex;
  flex-direction: column;
  align-items: center;
  flex: none;
  border: 1px solid #333;
  background: #5c5c5c;
}
.vbar .hgrip { margin: 3px 0 1px; }
.vbar button { height: 22px; width: 22px; }
.vbar.left { width: 24px; margin-right: 4px; padding-right: 1px; border-left: 0; }
.vbar.right { width: 25px; margin: 0 5px 0 4px; padding-right: 1px; }
.hsep { width: 19px; height: 3px; margin: 1px 0; background: #fff; border-bottom: 1px solid #aaa; }
.vbar .glyph { color: #f00; font-size: 16px; padding-bottom: 4px; }
.vbar .num { font: bold 12px/16px "Liberation Sans", sans-serif; padding: 0; }

.canvas { position: relative; flex: 1; align-self: stretch; background: #000; overflow: hidden; }
.vplabel { position: absolute; left: 3px; top: 3px; font-size: 12px; }
.floating { position: absolute; left: 121px; top: 31px; }
.toolbar .tbclose { width: 8px; align-items: flex-start; padding-top: 2px; }
.toolbar .tbclose svg { width: 6px; height: 8px; }
.pt { position: absolute; width: 5px; height: 5px; background: linear-gradient(#fff, #fff) center / 5px 1px no-repeat, linear-gradient(#fff, #fff) center / 1px 5px no-repeat; }
.p1 { left: 669px; top: 441px; }
.p2 { left: 989px; top: 460px; }
.cross-v { position: absolute; left: 1332px; top: 0; bottom: 0; width: 1px; background: #00ee00; }
.cross-h { position: absolute; left: 689px; right: 0; top: 511px; height: 1px; background: #00ee00; }
.pick { position: absolute; left: 1325px; top: 504px; width: 15px; height: 15px; border: 1px solid #00ee00; background: #000; }
.viewcube {
  position: absolute;
  top: 14px;
  right: 16px;
  width: 134px;
  height: 136px;
  display: grid;
  grid-template: 22px 1fr 22px / 20px 1fr 20px;
  place-items: center;
  color: #a8a8a8;
  font-size: 18px;
}
.ring { position: absolute; left: 7px; top: 8px; width: 120px; height: 120px; border: 13px solid #2a2a2a; border-radius: 50%; }
.viewcube span { position: relative; }
.n, .s { grid-column: 1 / 4; }
.face {
  width: 52px;
  height: 52px;
  background: #9aa0a4;
  border: 10px solid #a4a4a4;
  color: #4a5054;
  font-size: 30px;
  font-weight: 300;
}
.wcs {
  position: absolute;
  right: 59px;
  top: 169px;
  width: 48px;
  height: 18px;
  gap: 5px;
  border: 1px solid #9a9aa2;
  border-radius: 4px;
  background: #83838c;
  color: #333;
  font: 11px/16px "Liberation Sans", sans-serif;
}
.navbar { position: absolute; right: 4px; top: 212px; width: 32px; height: 212px; border-radius: 4px; background: #404040; box-shadow: inset 0 0 0 1px #505050; }

/* command line */
.cmd { display: flex; flex: none; height: 74px; padding: 3px 3px 1px 0; }
.cmd-side {
  width: 28px;
  display: flex;
  flex-direction: column;
  align-items: center;
  justify-content: space-between;
  padding: 6px 2px 7px 0;
  background: linear-gradient(#909090, #3a3a3a);
}
.cmd-side .hgrip { width: 22px; height: 7px; background-image: conic-gradient(#c0c0c0 25%, transparent 0); background-size: 4px 4px; }
.cmd-main { flex: 1; display: flex; flex-direction: column; color: #111; }
.history {
  margin: 0;
  height: 42px;
  padding: 6px 3px 0;
  background: #c8c8c8;
  border-bottom: 1px solid #777;
  font-size: 23px;
  font-weight: 300;
  line-height: 34px;
  white-space: pre;
}
.history b { font: 20px/34px "Liberation Mono", monospace; }
.entry { flex: 1; display: flex; background: #fff; padding-left: 6px; gap: 8px; }
.entry button { gap: 3px; color: #777; }
.entry input { flex: 1; font-size: 23px; font-weight: 300; line-height: 24px; height: 24px; }
.entry input::placeholder { color: #999; opacity: 1; font-style: italic; }

/* symbol palette */
.palette { width: 219px; flex: none; display: flex; flex-direction: column; padding: 2px 0 4px; font-size: 13px; line-height: 15px; }
.pal-head { height: 26px; padding: 6px; background: #525252; border-radius: 4px 4px 0 0; flex: none; }
.pal-head .grip { display: block; width: 4px; height: 10px; margin: 0; opacity: .6; }
.pal-body { flex: 1; display: flex; margin-top: 3px; background: #434343; }
.pal-main { flex: 1; min-width: 0; display: flex; flex-direction: column; background: #3c3c3c; border-right: 1px solid #333; }
.viewmodes { height: 15px; flex: none; display: flex; padding-left: 14px; background: #434343; border: solid #282828; border-width: 1px 1px 1px 0; }
.viewmodes button { width: 20px; height: 13px; }
.viewmodes button.on { background: #2a2a2a; }
.viewmodes svg { width: 10px; height: 10px; }
.cat {
  position: relative;
  height: 28px;
  padding: 0 0 1px 10px;
  background: #444;
  border-bottom: 1px solid #2c2c2c;
}
.cat.on { background: #303030; }
.cat::after { content: ""; position: absolute; right: 0; bottom: 2px; border: 3px solid; border-color: transparent #888 #888 transparent; }
.symbols {
  flex: 1;
  display: grid;
  grid-template-columns: 66px 66px;
  grid-auto-rows: 83px;
  gap: 20px 18px;
  align-content: start;
  padding: 11px 0 11px 21px;
  font-family: "Liberation Mono", "Noto Sans CJK SC", monospace;
  font-size: 12px;
}
.sym { flex-direction: column; justify-content: flex-start; white-space: nowrap; }
.sym svg { width: 66px; height: 66px; background: #000; stroke: #fff; fill: none; }
.vtabs { width: 29px; flex: none; display: flex; flex-direction: column; }
.vt-grip { height: 15px; padding: 5px 7px; background: #4a4a4a; border-top: 1px solid #282828; }
.vt-grip .hgrip { display: block; }
.vtabs button {
  height: 64px;
  padding: 0 8px 2px 7px;
  background: #5a5a5a;
  border: solid #2c2c2c;
  border-width: 0 0 1px 1px;
  box-shadow: inset 0 1px #777;
  text-align: center;
  word-break: break-all;
}
.vtabs button.on { background: #434343; box-shadow: none; }

/* status bar */
.status { position: relative; display: flex; justify-content: space-between; flex: none; height: 36px; background: #373737; border-bottom: 2px solid #dcd6e0; }
.layouts { display: flex; align-items: flex-start; padding-left: 10px; }
.ltab { position: relative; width: 66px; height: 22px; color: #b8b8b8; }
.ltab.on { color: #fff; font-weight: 700; }
.ltab + .ltab { width: 90px; margin-left: -4px; }
.layouts .addtab { margin: 1px 0 0 3px; }
.cells { display: flex; gap: 2px; padding-top: 1px; background: #6e6e6e; }
.cell { display: flex; align-items: center; gap: 9px; padding: 0 5px 2px; background: #515151; border: 1px solid #777; color: #bbb; }
.cell.joined { margin-right: -2px; }
.cell button { min-width: 20px; height: 28px; }
.cell svg { width: 20px; height: 20px; }
.cell .big svg { width: 26px; height: 22px; }
.cell .c { width: 10px; height: 10px; color: #fff; }
.cell .car { min-width: 10px; }
.cell .model { color: #fff; font-size: 15px; }
.cell:first-child { padding: 0 2px 2px; }
.anno .blue { color: #2b8cff; }
.cell .scale { color: #fff; gap: 4px; }
.glow { filter: drop-shadow(0 0 2px #0a5ad0); }
.watermark {
  position: absolute;
  right: 17px;
  top: 4px;
  font: 20px/24px Roboto, sans-serif;
  color: #d0d0d0;
  opacity: .85;
  text-shadow: 1px 1px 1px #333;
}
```
